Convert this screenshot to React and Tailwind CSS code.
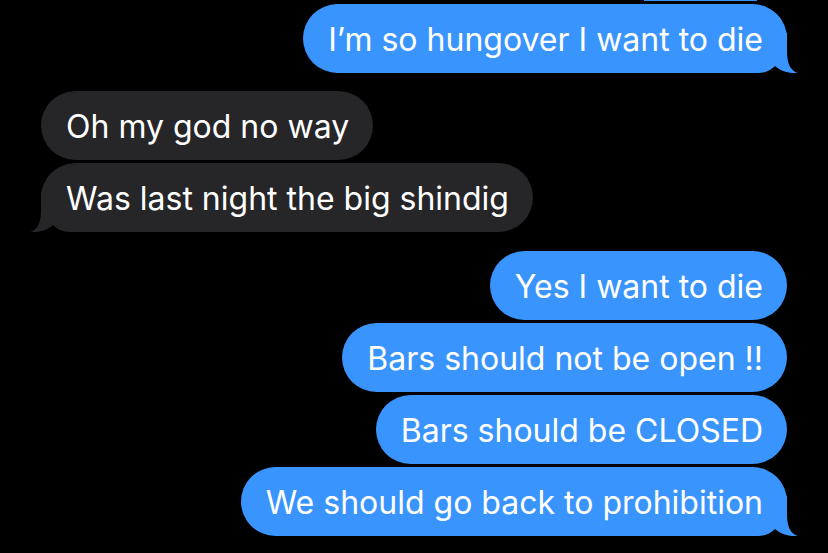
import React from "react";

const BLUE = "bg-[#3a94fd]";
const GRAY = "bg-[#262629]";

function Tail({ side }) {
  // little iMessage tail under the last bubble of a group
  const fill = side === "right" ? "#3a94fd" : "#262629";
  return (
    <svg
      width="48"
      height="40"
      viewBox="0 0 48 40"
      className={
        "absolute bottom-0 " +
        (side === "right" ? "right-[-11px]" : "left-[-11px] -scale-x-100")
      }
    >
      <path
        d="M0 0 H37 V18 C37 30 40 37 47.5 40 C40 40.6 31 38.5 25 33 C21 37 16 40 8 40 H0 Z"
        fill={fill}
      />
    </svg>
  );
}

function Bubble({ text, me, tail }) {
  return (
    <div className={"flex " + (me ? "justify-end" : "justify-start")}>
      <div
        className={
          "relative flex h-[69px] items-center rounded-[35px] pl-[25px] pr-[24px] pt-[3px] text-[32px] leading-none text-white " +
          (me ? BLUE : GRAY)
        }
      >
        <span className="relative z-10 whitespace-nowrap">{text}</span>
        {tail && <Tail side={me ? "right" : "left"} />}
      </div>
    </div>
  );
}

export default function App() {
  return (
    <div
      className="h-[553px] w-[828px] overflow-hidden bg-black pl-[41px] pr-[41px]"
      style={{ fontFamily: "Inter, 'Noto Sans', sans-serif" }}
    >
      {/* tail end of the previous bubble, cut off at the top */}
      <div className="flex justify-end pr-[30px]">
        <div className={"h-px w-[113px] " + BLUE} />
      </div>

      <div className="mt-[3px] flex flex-col">
        <Bubble me tail text="I’m so hungover I want to die" />
      </div>

      <div className="mt-[18px] flex flex-col gap-[3px]">
        <Bubble text="Oh my god no way" />
        <Bubble tail text="Was last night the big shindig" />
      </div>

      <div className="mt-[19px] flex flex-col gap-[3px]">
        <Bubble me text="Yes I want to die" />
        <Bubble me text="Bars should not be open !!" />
        <Bubble me text="Bars should be CLOSED" />
        <Bubble me tail text="We should go back to prohibition" />
      </div>
    </div>
  );
}
